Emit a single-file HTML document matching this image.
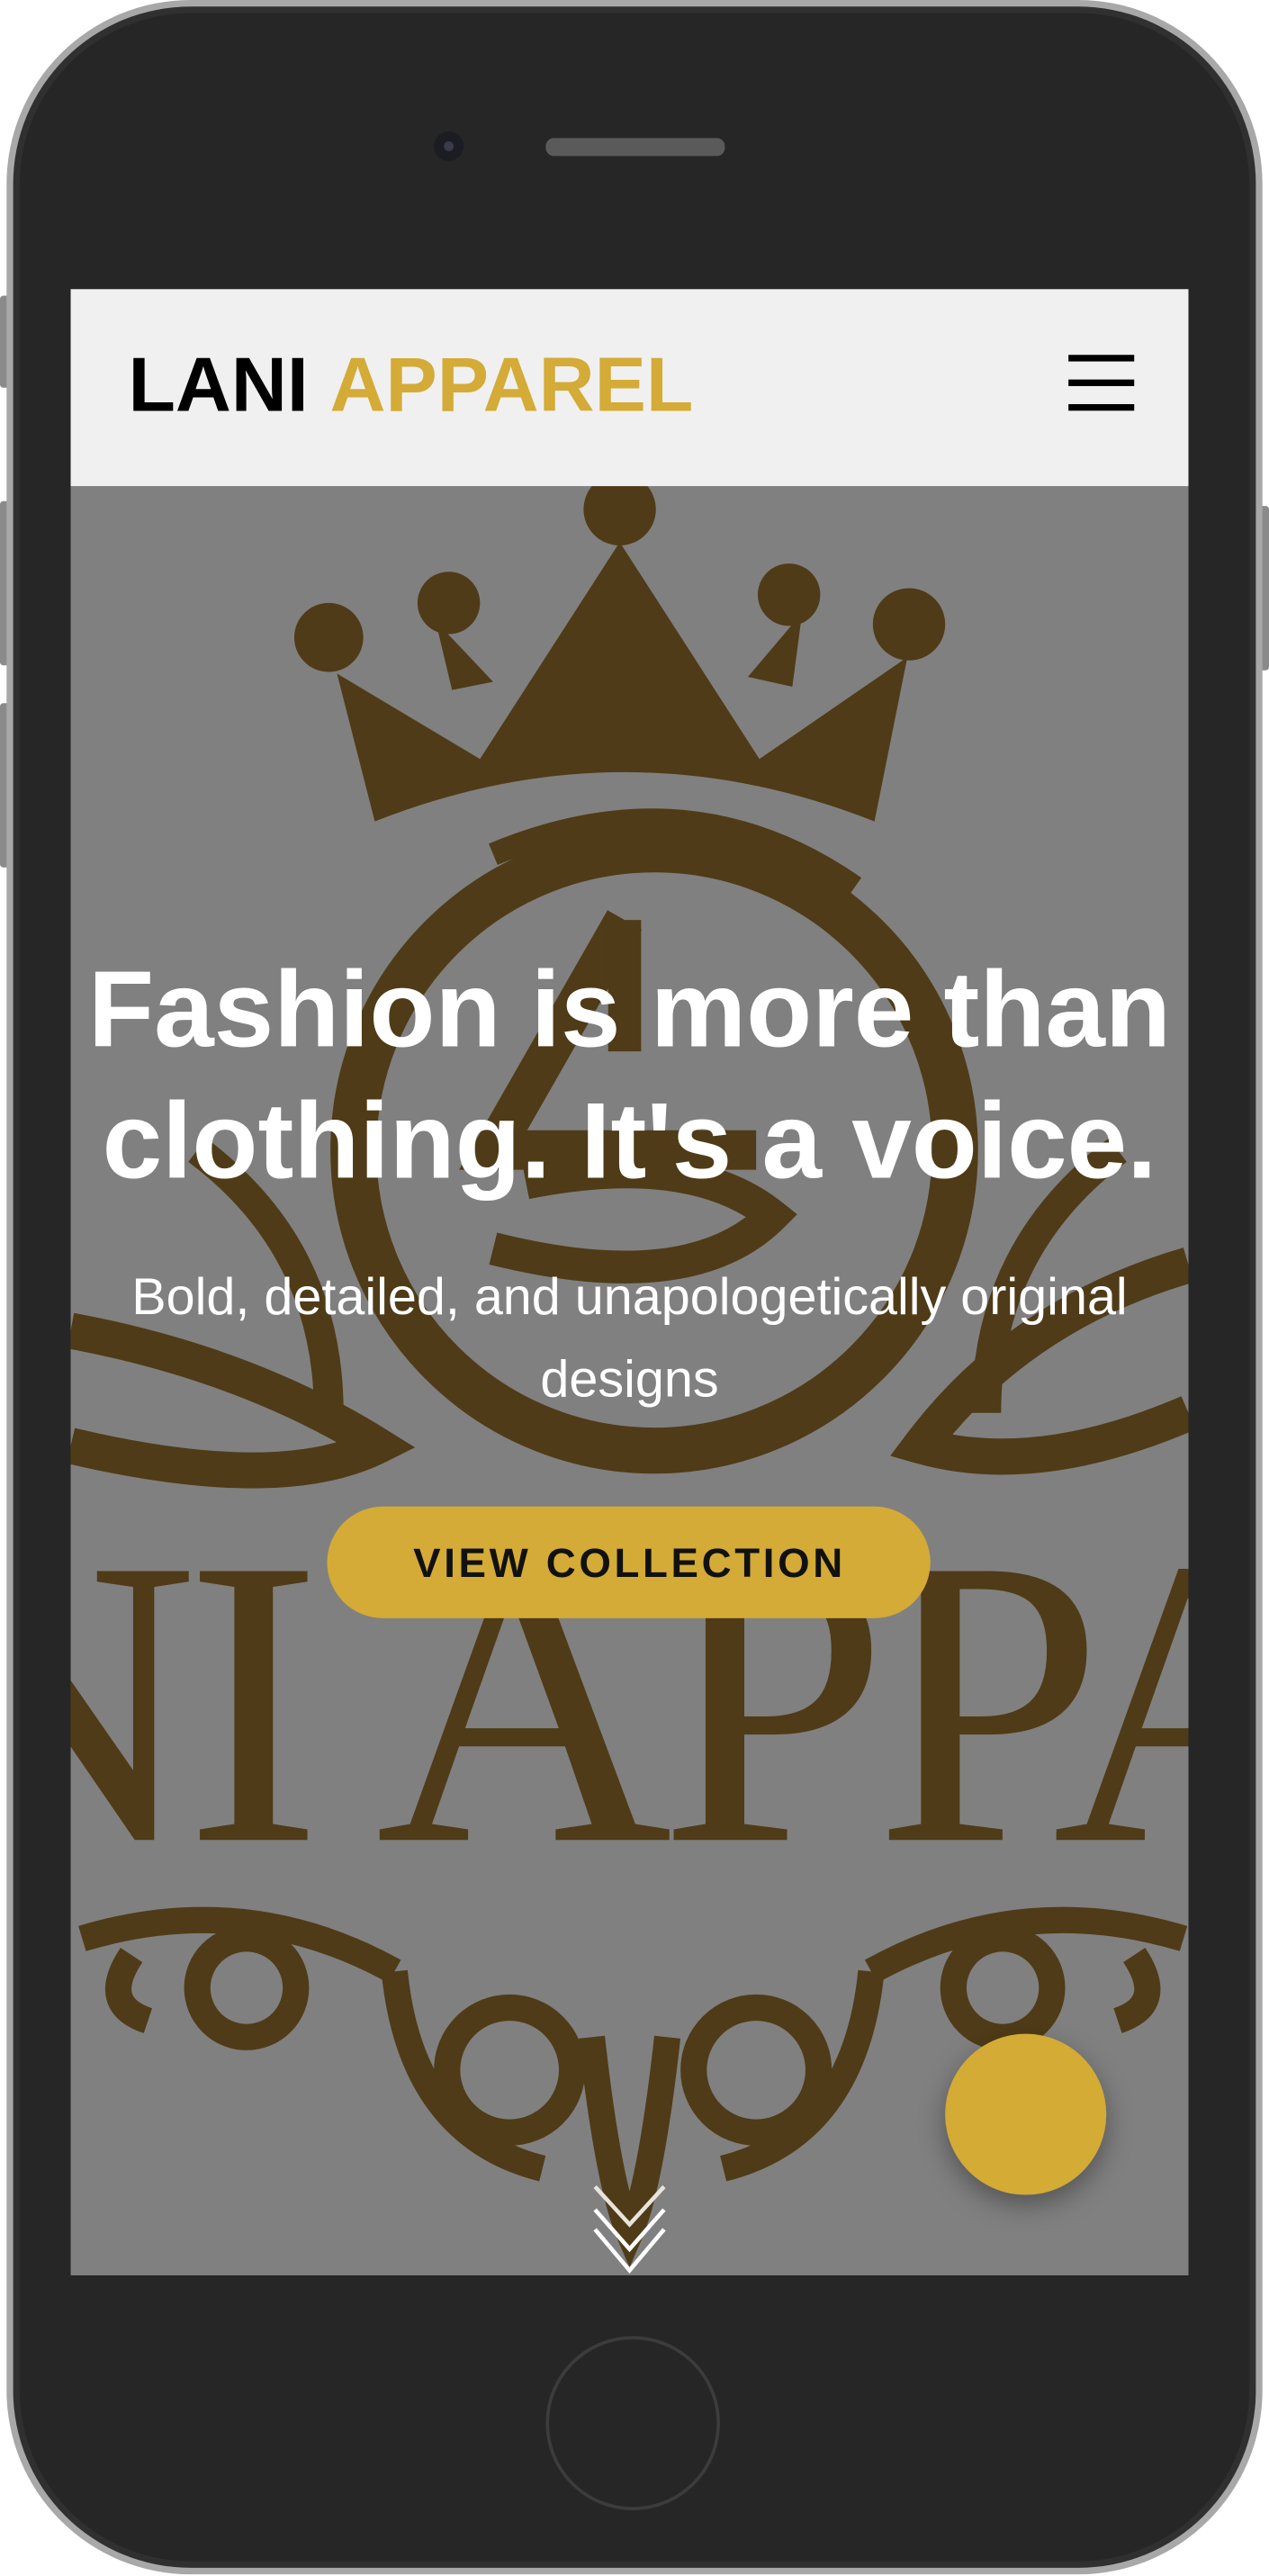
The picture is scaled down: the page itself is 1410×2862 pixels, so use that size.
<!DOCTYPE html>
<html><head><meta charset="utf-8"><style>
html,body{margin:0;padding:0;background:#fff;}
svg{display:block}
</style></head><body>
<svg width="1410" height="2862" viewBox="0 0 772 1568" preserveAspectRatio="none" xmlns="http://www.w3.org/2000/svg">
<defs>
<clipPath id="hc"><rect x="43" y="296" width="680" height="1089"/></clipPath>
<filter id="sh" x="-50%" y="-50%" width="200%" height="200%"><feDropShadow dx="0" dy="6" stdDeviation="8" flood-color="#000" flood-opacity="0.35"/></filter>
</defs>
<rect x="0" y="180" width="8" height="56" rx="2" fill="#8a8a8a"/>
<rect x="0" y="305" width="8" height="100" rx="2" fill="#8a8a8a"/>
<rect x="0" y="428" width="8" height="100" rx="2" fill="#8a8a8a"/>
<rect x="764" y="308" width="8" height="100" rx="2" fill="#8a8a8a"/>
<rect x="4" y="0" width="764" height="1567" rx="112" fill="#a8a8a8"/>
<rect x="8" y="4" width="756" height="1559" rx="108" fill="#303030"/>
<rect x="12" y="8" width="748" height="1551" rx="104" fill="#262626"/>
<circle cx="273" cy="89" r="9" fill="#1c1c24"/>
<circle cx="273" cy="89" r="3" fill="#3a3a48"/>
<rect x="332" y="84" width="109" height="11" rx="5" fill="#5a5a5a"/>
<circle cx="385" cy="1475" r="52" fill="none" stroke="#3c3c3c" stroke-width="2"/>
<rect x="43" y="176" width="680" height="120" fill="#f0f0f0"/>
<text x="78" y="250" font-family="Liberation Sans, sans-serif" font-weight="bold" font-size="47" fill="#000">LANI <tspan fill="#d3ab36">APPAREL</tspan></text>
<rect x="650" y="216" width="40" height="4" fill="#000"/>
<rect x="650" y="231" width="40" height="4" fill="#000"/>
<rect x="650" y="246" width="40" height="4" fill="#000"/>
<rect x="43" y="296" width="680" height="1089" fill="#808080"/>
<g clip-path="url(#hc)" fill="#4f3b17" stroke="none">
  <path d="M205,410 L292,462 L377,330 L462,462 L552,400 L532,500 Q380,440 228,500 Z"/>
  <circle cx="200" cy="388" r="21"/><circle cx="273" cy="367" r="19"/>
  <circle cx="377" cy="310" r="22"/><circle cx="480" cy="362" r="19"/><circle cx="553" cy="380" r="22"/>
  <path d="M265,378 L300,415 L275,420 Z"/><path d="M488,373 L455,412 L482,418 Z"/>
  <circle cx="398" cy="700" r="183" fill="none" stroke="#4f3b17" stroke-width="28"/>
  <path d="M300,520 Q420,470 520,540" fill="none" stroke="#4f3b17" stroke-width="14"/>
  <path d="M380,560 L300,700 L460,700" fill="none" stroke="#4f3b17" stroke-width="24"/>
  <path d="M380,560 L380,640" fill="none" stroke="#4f3b17" stroke-width="20"/>
  <path d="M320,720 Q420,700 470,740 Q420,790 300,760" fill="none" stroke="#4f3b17" stroke-width="20"/>
  <path d="M43,810 Q150,830 230,880 Q170,910 43,880" fill="none" stroke="#4f3b17" stroke-width="22"/>
  <path d="M723,770 Q620,800 560,880 Q630,900 723,860" fill="none" stroke="#4f3b17" stroke-width="22"/>
  <path d="M120,700 Q200,760 200,860" fill="none" stroke="#4f3b17" stroke-width="18"/>
  <path d="M680,700 Q600,760 600,860" fill="none" stroke="#4f3b17" stroke-width="18"/>
  <text x="-60" y="1120" font-family="Liberation Serif, serif" font-size="250" fill="#4f3b17" letter-spacing="-8">NI APPA</text>
  <g fill="none" stroke="#4f3b17" stroke-width="16">
    <path d="M50,1180 Q150,1150 240,1200"/>
    <path d="M720,1180 Q620,1150 530,1200"/>
    <circle cx="150" cy="1210" r="30"/><circle cx="610" cy="1210" r="30"/>
    <circle cx="310" cy="1260" r="38"/><circle cx="460" cy="1260" r="38"/>
    <path d="M240,1200 Q250,1300 330,1320"/><path d="M530,1200 Q520,1300 440,1320"/>
    <path d="M360,1240 Q370,1330 383,1360 Q396,1330 406,1240"/>
    <path d="M80,1190 Q60,1220 90,1230"/><path d="M690,1190 Q710,1220 680,1230"/>
  </g>
</g>
<text text-anchor="middle" font-family="Liberation Sans, sans-serif" font-weight="bold" font-size="65.5" fill="#fff"><tspan x="383" y="637">Fashion is more than</tspan><tspan x="383" y="717">clothing. It's a voice.</tspan></text>
<text text-anchor="middle" font-family="Liberation Sans, sans-serif" font-size="31.5" fill="#fff"><tspan x="383" y="800">Bold, detailed, and unapologetically original</tspan><tspan x="383" y="850">designs</tspan></text>
<rect x="199" y="917" width="367" height="68" rx="34" fill="#d3ab36"/>
<text x="383" y="960" text-anchor="middle" font-family="Liberation Sans, sans-serif" font-weight="bold" font-size="25" letter-spacing="2" fill="#111">VIEW COLLECTION</text>
<circle cx="624" cy="1287" r="49" fill="#d3ab36" filter="url(#sh)"/>
<g fill="none" stroke="#fff" stroke-width="2.5">
<polyline points="362,1331 383,1354 404,1331" stroke="#e8e4dc"/>
<polyline points="362,1345 383,1369 404,1345"/>
<polyline points="362,1357 383,1382 404,1357"/>
</g>
</svg>
</body></html>
